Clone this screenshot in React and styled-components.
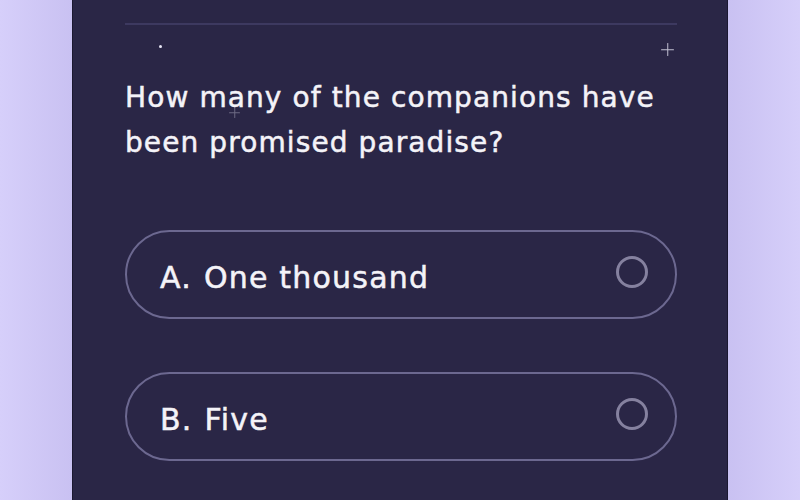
import React from 'react';
import styled, { createGlobalStyle } from 'styled-components';

const Global = createGlobalStyle`
  html, body {
    margin: 0;
    padding: 0;
  }
  body {
    font-family: "DejaVu Sans", "Inter", sans-serif;
  }
`;

const Page = styled.div`
  width: 800px;
  height: 500px;
  overflow: hidden;
  display: flex;
  justify-content: center;
  background: linear-gradient(
    90deg,
    #d6cffa 0%,
    #c9c1f2 9%,
    #c9c1f2 91%,
    #d6cffa 100%
  );
`;

const Card = styled.div`
  position: relative;
  box-sizing: border-box;
  width: 656px;
  height: 500px;
  background: #2a2646;
  border-left: 1px solid #1b1830;
  border-right: 1px solid #1b1830;
  padding: 23px 50px 0 52px;
  display: flex;
  flex-direction: column;
`;

const Divider = styled.div`
  height: 2px;
  background: #3d3960;
`;

const Question = styled.h2`
  margin: 50px 0 0;
  color: #f4f3f8;
  font-size: 28px;
  font-weight: 400;
  line-height: 45px;
  letter-spacing: 1.1px;
  -webkit-text-stroke: 0.5px #f4f3f8;
  white-space: nowrap;
`;

const Options = styled.div`
  margin-top: 65px;
  display: flex;
  flex-direction: column;
  gap: 53px;
`;

const Option = styled.div`
  box-sizing: border-box;
  height: 89px;
  border: 2px solid #6c6890;
  border-radius: 45px;
  display: flex;
  align-items: center;
  justify-content: space-between;
  padding: 0 27px 6px 33px;
  color: #f4f3f8;
  font-size: 30px;
  font-weight: 400;
  letter-spacing: 1.2px;
  -webkit-text-stroke: 0.5px #f4f3f8;
`;

const Label = styled.span`
  margin-top: 12px;
  display: flex;
  gap: 12px;
`;

const Radio = styled.span`
  width: 32px;
  height: 32px;
  box-sizing: border-box;
  border: 3px solid #85819f;
  border-radius: 50%;
`;

const Sparkle = styled.span`
  position: absolute;
  left: ${p => p.x}px;
  top: ${p => p.y}px;
  width: ${p => p.size}px;
  height: ${p => p.size}px;
  opacity: ${p => p.o};
  &::before,
  &::after {
    content: '';
    position: absolute;
    background: #e8e6f5;
    border-radius: 1px;
  }
  &::before {
    left: 50%;
    top: 0;
    width: 1.5px;
    height: 100%;
    transform: translateX(-50%);
  }
  &::after {
    top: 50%;
    left: 0;
    height: 1.5px;
    width: 100%;
    transform: translateY(-50%);
  }
`;

const Dot = styled.span`
  position: absolute;
  left: 86px;
  top: 45px;
  width: 3px;
  height: 3px;
  border-radius: 50%;
  background: #e8e6f5;
`;

const options = [
  { key: 'A', text: 'One thousand' },
  { key: 'B', text: 'Five' },
];

export default function App() {
  return (
    <Page>
      <Global />
      <Card>
        <Divider />
        <Dot />
        <Sparkle x={588} y={43} size={13} o={0.8} />
        <Sparkle x={156} y={107} size={11} o={0.35} />
        <Question>
          How many of the companions have
          <br />
          been promised paradise?
        </Question>
        <Options>
          {options.map(o => (
            <Option key={o.key}>
              <Label>
                <span>{o.key}.</span>
                <span>{o.text}</span>
              </Label>
              <Radio />
            </Option>
          ))}
        </Options>
      </Card>
    </Page>
  );
}
